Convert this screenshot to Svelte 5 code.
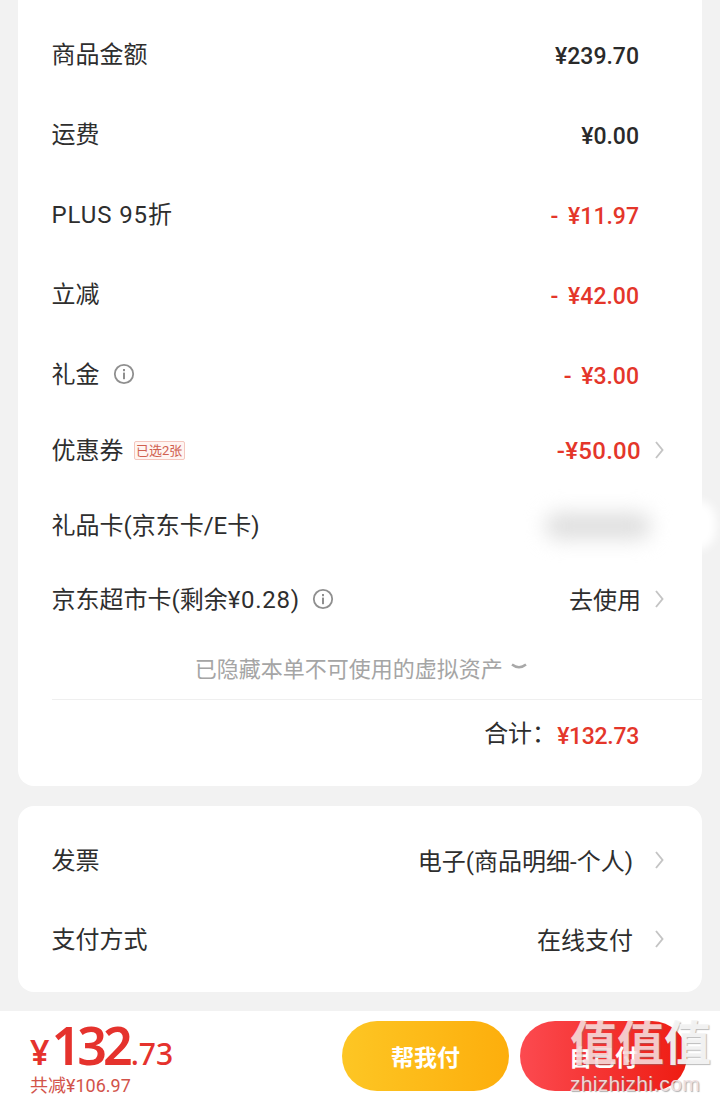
<script>
  const topRows = [
    { label: '商品金额', value: '¥239.70' },
    { label: '运费', value: '¥0.00' },
    { label: 'PLUS 95折', value: '- ¥11.97', red: true, wide: true },
    { label: '立减', value: '- ¥42.00', red: true },
    { label: '礼金', value: '- ¥3.00', red: true, info: true }
  ];
</script>

{#snippet chevron()}
  <svg class="chev" width="9" height="18" viewBox="0 0 9 18"><path d="M1 1 L7.5 9 L1 17" fill="none" stroke="#c4c4c4" stroke-width="1.9"/></svg>
{/snippet}
{#snippet info()}
  <svg class="info" width="22" height="22" viewBox="0 0 22 22"><circle cx="11" cy="11" r="9.2" fill="none" stroke="#8f8f8f" stroke-width="1.8"/><rect x="10" y="9.6" width="2" height="6.6" fill="#8f8f8f"/><rect x="10" y="6" width="2" height="2.2" fill="#8f8f8f"/></svg>
{/snippet}

<div class="page">
  <section class="card first">
    {#each topRows as r}
      <div class="row tall">
        <div class="label" class:wide={r.wide}>{r.label}{#if r.info}{@render info()}{/if}</div>
        <div class="num" class:red={r.red}>{r.value}</div>
      </div>
    {/each}
    <div class="row coupon">
      <div class="label">优惠券<span class="tag">已选2张</span></div>
      <div class="end"><span class="num red strong">-¥50.00</span>{@render chevron()}</div>
    </div>
    <div class="row gift">
      <div class="label">礼品卡(京东卡/E卡)</div>
      <div class="blur"></div>
    </div>
    <div class="row market">
      <div class="label">京东超市卡(剩余<span class="tight">¥0.28</span>){@render info()}</div>
      <div class="end"><span class="plain">去使用</span>{@render chevron()}</div>
    </div>
    <div class="hidden">已隐藏本单不可使用的虚拟资产
      <svg width="16" height="8" viewBox="0 0 16 8"><path d="M1 1.5 Q8 7 15 1.5" fill="none" stroke="#a8a8a8" stroke-width="2.4"/></svg>
    </div>
    <div class="total">
      <span class="plain">合计：</span><span class="num red">¥132.73</span>
    </div>
  </section>

  <section class="card second">
    <div class="row tall">
      <div class="label">发票</div>
      <div class="end"><span class="plain">电子(商品明细-个人)</span>{@render chevron()}</div>
    </div>
    <div class="row tall">
      <div class="label">支付方式</div>
      <div class="end"><span class="plain">在线支付</span>{@render chevron()}</div>
    </div>
  </section>

  <footer class="bar">
    <div class="sum">
      <div class="price"><span class="yen">¥</span><span class="big">132</span><span class="dec">.73</span></div>
      <div class="saved">共减¥106.97</div>
    </div>
    <div class="btns">
      <button class="btn help">帮我付</button>
      <button class="btn self">自己付</button>
    </div>
  </footer>

  <div class="mark" aria-hidden="true">
    <div class="mark-big"><span>值</span><span>值</span><span class="grey">值</span></div>
    <div class="mark-url">zhizhizhi.com</div>
  </div>
</div>

<style>
  :global(body) { margin: 0; background: #f2f2f2; }
  .page {
    position: relative;
    width: 720px;
    height: 1101px;
    overflow: hidden;
    background: #f2f2f2;
    font-family: Roboto, "Noto Sans CJK SC", sans-serif;
    color: #2a2a2a;
    display: flex;
    flex-direction: column;
    padding-top: 15px;
    box-sizing: border-box;
  }
  .card {
    margin: 0 18px;
    background: #fff;
    border-radius: 16px;
    padding: 0 0 0 33.5px;
  }
  .first { margin-top: -30px; padding-top: 30px; height: 801px; box-sizing: border-box; }
  .second { margin-top: 20px; height: 186px; padding-top: 15px; box-sizing: border-box; }
  .row {
    display: flex;
    align-items: center;
    justify-content: space-between;
    padding-right: 63px;
  }
  .tall { height: 80px; }
  .coupon { height: 70px; margin-top: 1px; }
  .gift { height: 80px; position: relative; }
  .market { height: 68px; }
  .second .tall { height: 79px; }
  .second .row, .coupon, .market { padding-right: 38px; }
  .label {
    display: flex;
    align-items: center;
    font-size: 24px;
    line-height: 30px;
    color: #2e2e2e;
  }
  .wide { letter-spacing: 0.9px; }
  .tight { letter-spacing: 0.7px; }
  .info { margin-left: 13px; position: relative; top: -1px; }
  .num {
    font-family: Roboto, sans-serif;
    font-size: 23px;
    font-weight: 500;
    color: #2a2a2a;
    position: relative;
    top: 1px;
  }
  .red { color: #e4362a; word-spacing: 4px; }
  .strong { font-size: 24px; letter-spacing: 0.3px; top: 0; }
  .plain { font-size: 24px; line-height: 30px; color: #2e2e2e; position: relative; top: 1px; }
  .end { display: flex; align-items: center; gap: 14px; }
  .second .end { gap: 22px; }
  .chev { flex: none; position: relative; top: -1px; }
  .tag {
    margin-left: 10px;
    font-size: 13px;
    line-height: 17px;
    padding: 0 1.5px;
    color: #d0604f;
    background: #fff5f2;
    border: 1px solid #f4c6bd;
    border-radius: 2px;
    position: relative;
    top: -1px;
  }
  .blur {
    width: 106px;
    height: 26px;
    margin-right: -12px;
    background: #dedede;
    border-radius: 13px;
    filter: blur(10px);
  }
  .gift::after {
    content: "";
    position: absolute;
    right: -14px;
    top: 14px;
    width: 40px;
    height: 50px;
    background: #fff;
    border-radius: 25px;
    filter: blur(5px);
  }
  .hidden {
    height: 66px;
    display: flex;
    align-items: center;
    justify-content: center;
    gap: 8px;
    font-size: 22px;
    color: #a5a5a5;
    border-bottom: 1px solid #efefef;
    box-sizing: border-box;
    padding-right: 32px;
    white-space: nowrap;
  }
  .total {
    display: flex;
    justify-content: flex-end;
    align-items: center;
    height: 68px;
    padding-right: 63px;
  }
  .total .plain { top: 0; margin-right: 1px; }
  .total .num { top: 2px; letter-spacing: -0.3px; }
  .bar {
    position: absolute;
    left: 0;
    right: 0;
    bottom: 0;
    height: 90px;
    background: #fff;
    display: flex;
    justify-content: space-between;
    align-items: flex-start;
    padding: 10px 33px 0 30px;
    box-sizing: border-box;
  }
  .sum { display: flex; flex-direction: column; }
  .price {
    display: flex;
    align-items: baseline;
    color: #e5322d;
    font-family: "Noto Sans", sans-serif;
    line-height: 48px;
    height: 48px;
  }
  .yen { font-size: 34px; font-weight: 600; margin-right: 2px; }
  .big { font-size: 52px; font-weight: 600; letter-spacing: -4px; margin-right: 2px; }
  .dec { font-size: 30px; font-weight: 500; }
  .saved { font-size: 18px; line-height: 24px; color: #d2534a; margin-top: 5px; }
  .btns { display: flex; gap: 11px; }
  .btn {
    width: 167px;
    height: 70px;
    border: 0;
    border-radius: 35px;
    color: #fff;
    font: 700 23px "Noto Sans CJK SC", sans-serif;
    padding: 0;
  }
  .help { background: linear-gradient(90deg, #fdc624, #fdae0c); }
  .self { background: linear-gradient(90deg, #fc4a50, #ee1c12); }
  .mark {
    position: absolute;
    left: 570px;
    top: 1017px;
    width: 150px;
    pointer-events: none;
  }
  .mark-big {
    display: flex;
    font-size: 47px;
    line-height: 54px;
    font-weight: 700;
    color: rgba(255, 225, 225, 0.85);
    text-shadow: 1px 1px 1px rgba(120, 120, 120, 0.5);
  }
  .mark-big .grey { color: rgba(245, 245, 245, 0.95); }
  .mark-url {
    font-family: "Liberation Sans", sans-serif;
    font-size: 21px;
    letter-spacing: 0.3px;
    line-height: 24px;
    margin-top: 1px;
    color: rgba(240, 225, 225, 0.95);
    text-shadow: 1px 1px 1px rgba(120, 120, 120, 0.6);
  }
</style>
